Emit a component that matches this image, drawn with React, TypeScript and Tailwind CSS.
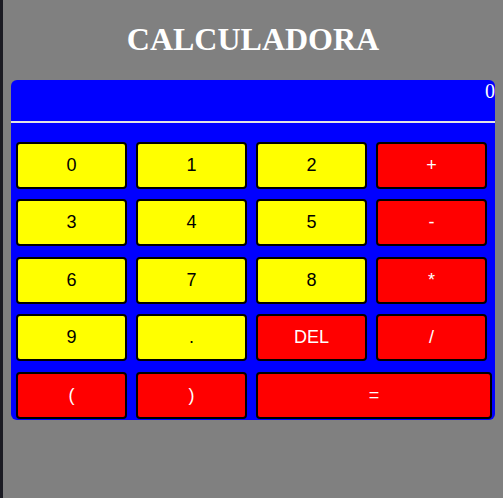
import { FC, useState } from "react";

type Key = { label: string; kind: "num" | "op"; wide?: boolean };

const keys: Key[] = [
  { label: "0", kind: "num" },
  { label: "1", kind: "num" },
  { label: "2", kind: "num" },
  { label: "+", kind: "op" },
  { label: "3", kind: "num" },
  { label: "4", kind: "num" },
  { label: "5", kind: "num" },
  { label: "-", kind: "op" },
  { label: "6", kind: "num" },
  { label: "7", kind: "num" },
  { label: "8", kind: "num" },
  { label: "*", kind: "op" },
  { label: "9", kind: "num" },
  { label: ".", kind: "num" },
  { label: "DEL", kind: "op" },
  { label: "/", kind: "op" },
  { label: "(", kind: "op" },
  { label: ")", kind: "op" },
  { label: "=", kind: "op", wide: true },
];

const App: FC = () => {
  const [display, setDisplay] = useState("0");

  const press = (label: string) => {
    if (label === "DEL") {
      setDisplay((d) => (d.length > 1 ? d.slice(0, -1) : "0"));
      return;
    }
    if (label === "=") {
      try {
        // eslint-disable-next-line no-new-func
        const r = Function(`return (${display})`)();
        setDisplay(String(r));
      } catch {
        setDisplay("Error");
      }
      return;
    }
    setDisplay((d) => (d === "0" && label !== "." ? label : d + label));
  };

  return (
    <div className="min-h-screen flex bg-[#808080]">
      <div className="w-[3px] shrink-0 bg-[#1b1b23]" />
      <div className="flex-1 px-2">
        <h1 className="text-center font-bold text-[32px] leading-[normal] text-white my-[21.4px] font-['Liberation_Serif',serif]">
          CALCULADORA
        </h1>
        <div className="bg-[#0000ff] rounded-[6px] pb-px">
          <div className="h-[43px] border-b-2 border-[#e4e4e4] text-right text-white text-[20px] leading-[normal] font-['Liberation_Serif',serif]">
            {display}
          </div>
          <div className="grid grid-cols-[111px_111px_111px_111px] gap-x-[9px] gap-y-[10.5px] pl-[5px] pt-[19px]">
            {keys.map((k) => (
              <button
                key={k.label}
                onClick={() => press(k.label)}
                className={`h-[47px] border-2 border-black rounded-[4px] text-[18px] font-['Liberation_Sans',Arial,sans-serif] ${
                  k.kind === "num" ? "bg-[#ffff00] text-black" : "bg-[#ff0000] text-white"
                } ${k.wide ? "col-span-2 w-[236px]" : ""}`}
              >
                {k.label}
              </button>
            ))}
          </div>
        </div>
      </div>
    </div>
  );
};

export default App;
